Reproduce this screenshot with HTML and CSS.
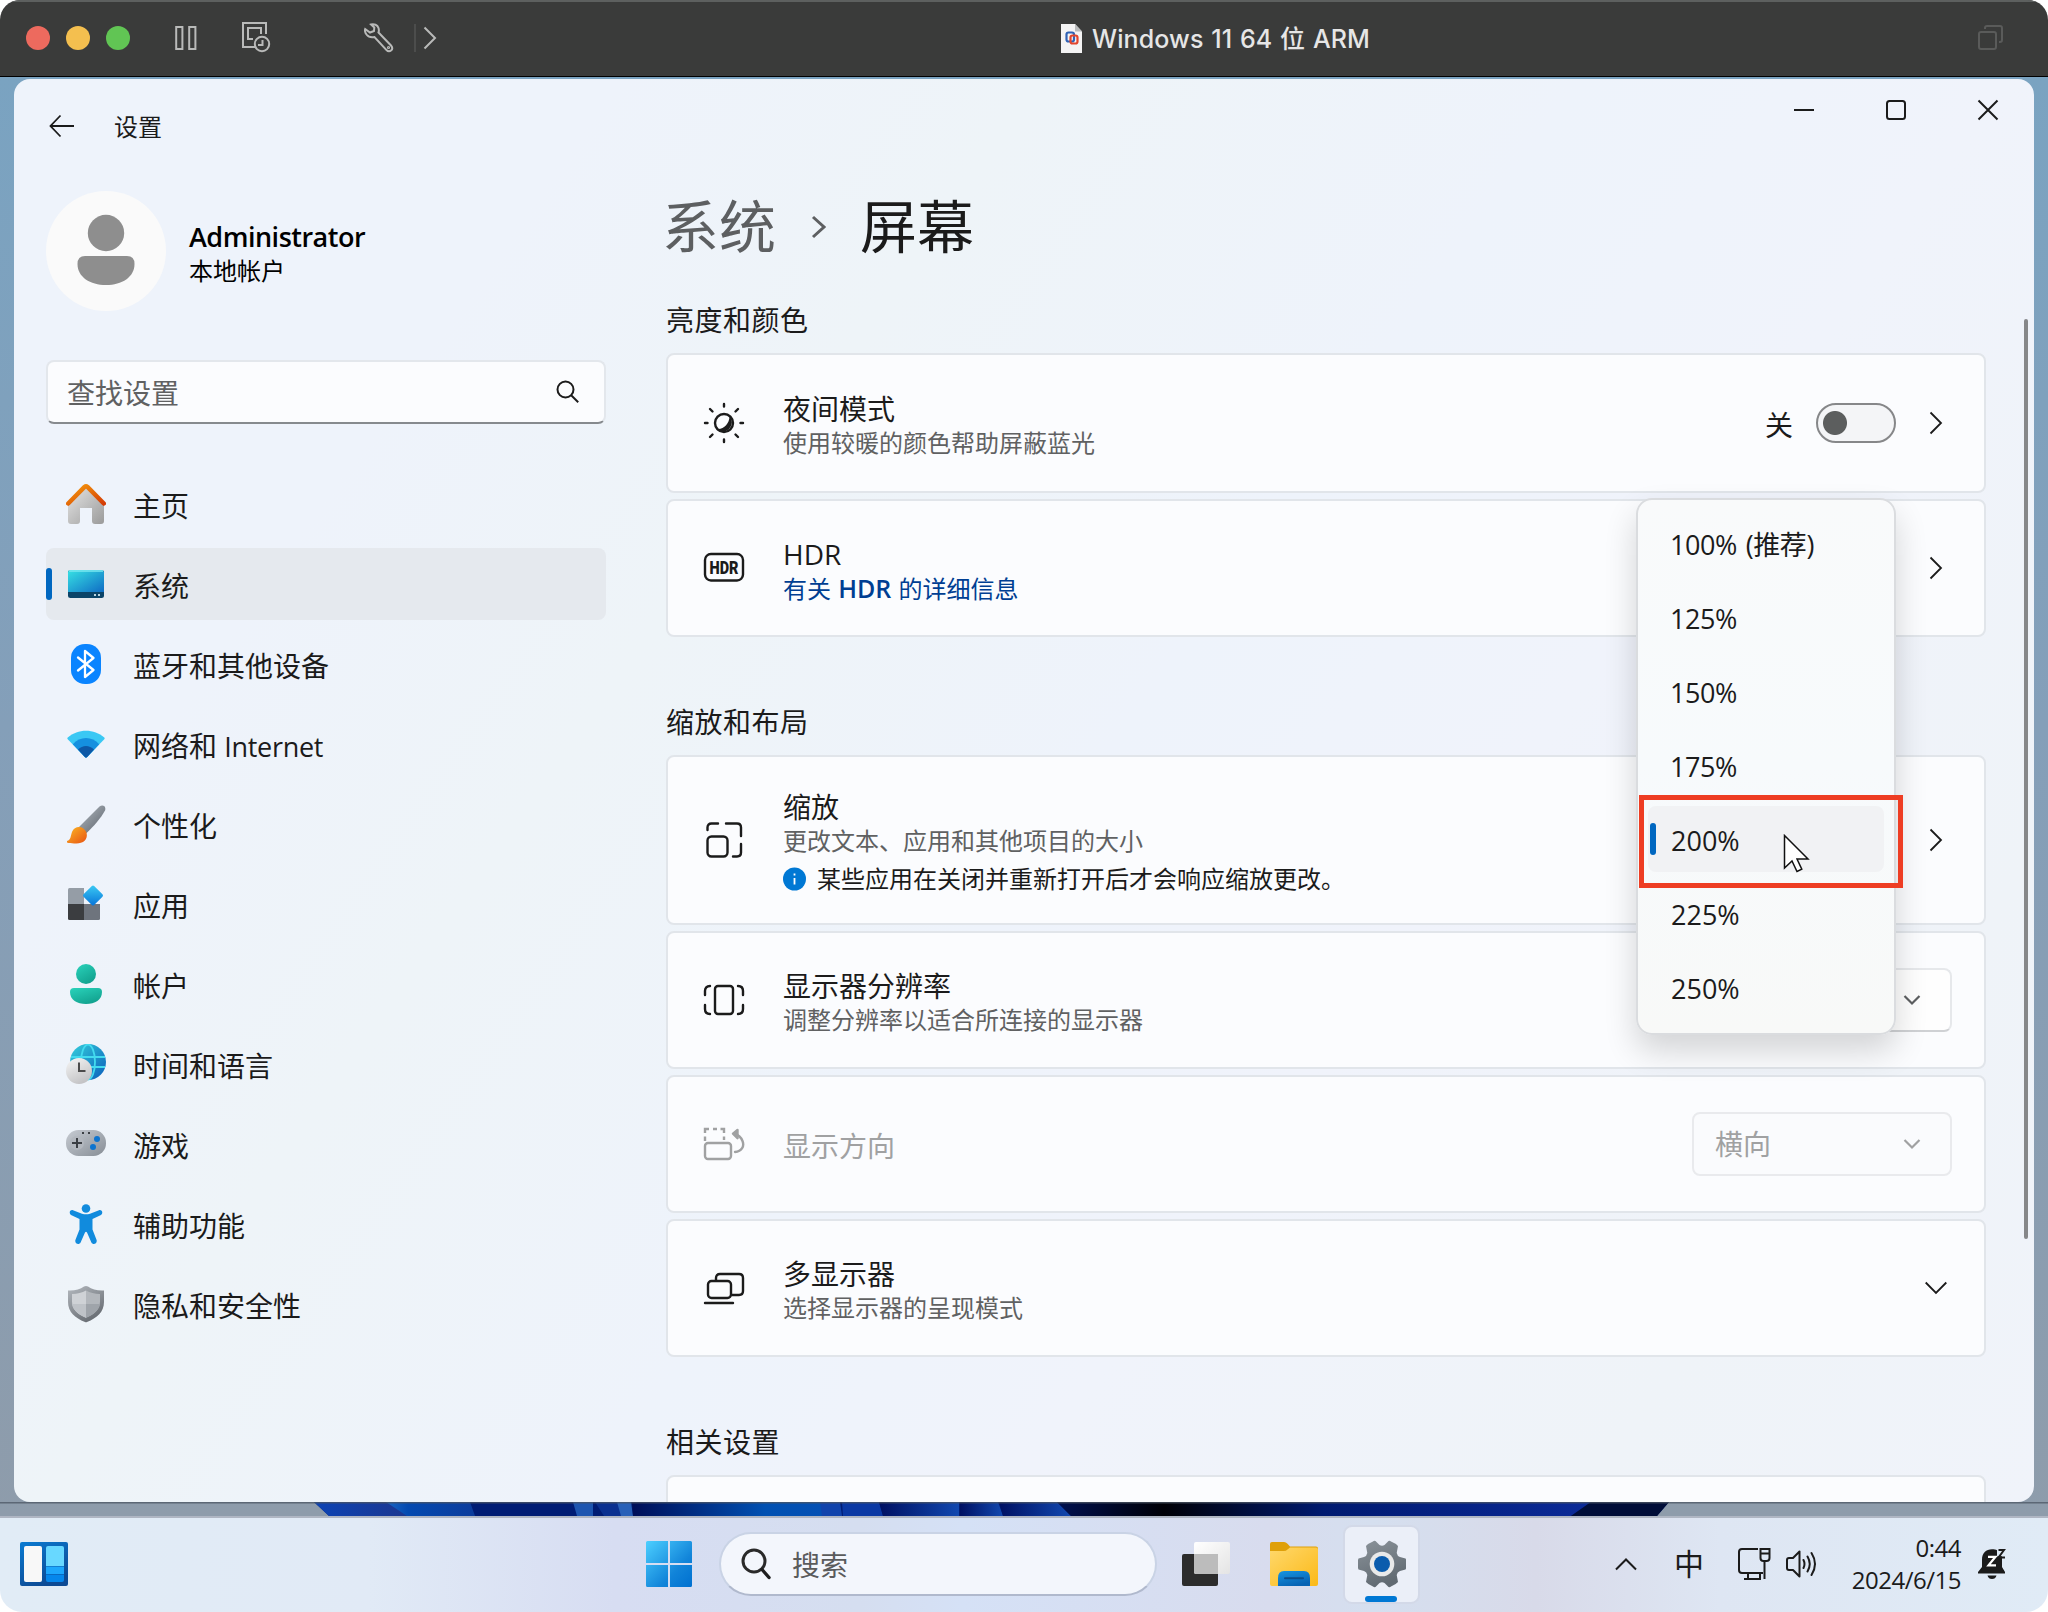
FILE: index.html
```html
<!DOCTYPE html>
<html lang="zh-CN">
<head>
<meta charset="utf-8">
<title>Windows 11 64 位 ARM</title>
<link rel="stylesheet" href="styles.css">
</head>
<body>
<div class="vm">
  <header class="vm-bar">
    <div class="lights"><i class="red"></i><i class="yellow"></i><i class="green"></i></div>
    <svg class="i-pause" width="22" height="24" viewBox="0 0 22 24"><path d="M1.2 1h6.2v22H1.2zM14.2 1h6.2v22h-6.2z"/></svg>
    <svg class="i-snap" width="30" height="32" viewBox="0 0 30 32"><path d="M24 12V1H1v24h12M6 17h5M6 18V6h13v6"/><circle cx="20" cy="22" r="7.2"/><path d="M20.5 18v5h-4.5"/></svg>
    <svg class="i-wrench" width="30" height="30" viewBox="0 0 30 30"><path d="M7 1.5C10 .5 13.500 2 14.500 5c.5 1.800.5 3.300 0 4.500L27 22.500c1.500 1.700 1.500 3.500.3 4.800-1.500 1.300-3.500 1.200-5-.5L10.500 14c-3 .8-6 0-8-2.500C1 9.500.7 7.500 1.200 6L6 9.500l4-1.500.3-3.500z"/><circle cx="24.500" cy="24.500" r=".6"/></svg>
    <span class="vm-sep"></span>
    <svg class="i-more" width="14" height="24" viewBox="0 0 14 24"><path d="M1.500 1.500L12 12 1.500 22.500"/></svg>
    <div class="vm-title">
      <svg width="24" height="31" viewBox="0 0 24 31"><path d="M1 1h14l7 7.500V30H1z" fill="#f4f4f4"/><path d="M15 1l7 7.500h-7z" fill="#b9bbbc"/><rect x="6.500" y="9.500" width="7.500" height="9" rx="2" fill="none" stroke="#2f62b5" stroke-width="2.200"/><rect x="10.500" y="12.500" width="7" height="8" rx="2" fill="none" stroke="#e2452c" stroke-width="2.200"/></svg>
      <span>Windows 11 64 位 ARM</span>
    </div>
    <svg class="i-stack" width="26" height="26" viewBox="0 0 26 26"><rect x="1" y="7" width="17" height="17" rx="2"/><path d="M7 4V3q0-2 2-2h13q2 0 2 2v12q0 2-2 2h-1"/></svg>
  </header>

  <div class="desktop">
    <section class="window">
      <header class="win-head">
        <svg class="back" width="26" height="24" viewBox="0 0 26 24"><path d="M11.500 1.500L1.500 12l10 10.500M1.500 12H25"/></svg>
        <span class="win-title">设置</span>
        <div class="caption">
          <span><svg width="20" height="20"><path d="M0 10h20"/></svg></span>
          <span><svg width="22" height="22"><rect x="2" y="2" width="18" height="18" rx="2.500"/></svg></span>
          <span><svg width="22" height="22"><path d="M1.500 1.500l19 19M20.500 1.500l-19 19"/></svg></span>
        </div>
      </header>
      <div class="win-body">
        <aside class="side">
          <div class="profile">
            <svg width="120" height="120"><circle cx="60" cy="60" r="60" fill="#fafafa"/><circle cx="60" cy="42" r="18.200" fill="#8e8e8e"/><path d="M39 65h42q7.500 0 7.500 8C88.500 86 76 94 60 94S31.500 86 31.500 73q0-8 7.500-8z" fill="#8e8e8e"/></svg>
            <div><b>Administrator</b><span>本地帐户</span></div>
          </div>
          <div class="find"><span>查找设置</span><svg width="24" height="24" viewBox="0 0 24 24"><circle cx="9.500" cy="9.500" r="8"/><path d="M15.200 15.200l7 7"/></svg></div>
          <nav>
            <a><svg width="40" height="40" viewBox="0 0 40 40"><defs><linearGradient id="hw" x2="1" y2="1"><stop stop-color="#e6e6e6"/><stop offset="1" stop-color="#9a9a9a"/></linearGradient><linearGradient id="hr" x2="1" y2="1"><stop stop-color="#f59a0c"/><stop offset="1" stop-color="#d43c05"/></linearGradient></defs><path d="M2 19L20 3l18 16v18q0 3-3 3h-6q-3 0-3-3V24H14v13q0 3-3 3H5q-3 0-3-3z" fill="url(#hw)"/><path d="M2.200 19.500L18.500 3q1.500-1.300 3 0l16.300 16.500" fill="none" stroke="url(#hr)" stroke-width="4.500" stroke-linecap="round"/></svg><span>主页</span></a>
            <a class="on"><svg width="40" height="40" viewBox="0 0 40 40"><defs><linearGradient id="sy" x2="1" y2="1"><stop stop-color="#37e2e4"/><stop offset="1" stop-color="#0f6cc4"/></linearGradient></defs><rect x="2" y="6" width="36" height="28" rx="2.500" fill="#0b4468"/><path d="M2 28V8.500Q2 6 4.500 6h31Q38 6 38 8.500V28z" fill="url(#sy)"/><path d="M3 7h34" stroke="#7be9f0" stroke-width="1.500"/><path d="M28 30h2v2h-2zM32 30h2v2h-2z" fill="#b9d4e0"/></svg><span>系统</span></a>
            <a><svg width="40" height="40" viewBox="0 0 40 40"><rect x="5" y="0" width="30" height="40" rx="14" fill="#0a84ff"/><path d="M12 13.500l15.500 12.500-8.500 7V7l8.500 7L12 26.500" fill="none" stroke="#fff" stroke-width="2.300" stroke-linejoin="round" stroke-linecap="round"/></svg><span>蓝牙和其他设备</span></a>
            <a><svg width="40" height="40" viewBox="0 0 40 40"><path d="M1.500 15Q1 14.300 1.700 13.600C12 4.500 28 4.500 38.300 13.600q.7.700.2 1.400L21.200 33q-1.200 1-2.400 0z" fill="#3ac8f4"/><path d="M6.800 20.300C14 12 26 12 33.200 20.300L21.200 33q-1.200 1-2.400 0z" fill="#1590df"/><path d="M12 25.600c4.500-4.800 11.500-4.800 16 0L21.200 33q-1.200 1-2.400 0z" fill="#0d58a6"/></svg><span>网络和 <span class="latin">Internet</span></span></a>
            <a><svg width="40" height="40" viewBox="0 0 40 40"><defs><linearGradient id="br" x2="1" y2="1"><stop stop-color="#b8bfc6"/><stop offset="1" stop-color="#585f68"/></linearGradient><linearGradient id="bt" x2="1" y2="1"><stop stop-color="#fbb825"/><stop offset="1" stop-color="#e85212"/></linearGradient></defs><path d="M12 24L33.500 2.500c3-2.500 7-.5 5.500 4C35 14 28 22 20 29.500z" fill="url(#br)"/><path d="M1 37c4-1 3.500-5 5-9 2-5 8-6.500 12-3s4 10-1 13c-5 2-12 1.800-16 .6z" fill="url(#bt)"/></svg><span>个性化</span></a>
            <a><svg width="40" height="40" viewBox="0 0 40 40"><defs><linearGradient id="ap" x2="1" y2="1"><stop stop-color="#3ccbf4"/><stop offset="1" stop-color="#0673d8"/></linearGradient></defs><path d="M2 5.500Q2 4 3.500 4H18v16H2z" fill="#959da6"/><path d="M2 20h16v16H3.500Q2 36 2 34.500z" fill="#3b3d40"/><path d="M18 20h16v14.500q0 1.500-1.500 1.500H18z" fill="#6e747d"/><rect x="19.500" y="4" width="15" height="15" rx="1.600" transform="rotate(45 27 11.500)" fill="url(#ap)"/></svg><span>应用</span></a>
            <a><svg width="40" height="40" viewBox="0 0 40 40"><defs><linearGradient id="ac" x2=".6" y2="1"><stop stop-color="#2ad3bb"/><stop offset="1" stop-color="#12a28f"/></linearGradient></defs><circle cx="20" cy="10" r="10" fill="url(#ac)"/><path d="M8 24h24q4 0 4 4c0 8-7 12-16 12S4 36 4 28q0-4 4-4z" fill="url(#ac)"/></svg><span>帐户</span></a>
            <a><svg width="40" height="40" viewBox="0 0 40 40"><defs><linearGradient id="gl" x2="1" y2="1"><stop stop-color="#35d0dc"/><stop offset="1" stop-color="#0a5dbb"/></linearGradient><linearGradient id="ck" x2=".5" y2="1"><stop stop-color="#f6f6f6"/><stop offset="1" stop-color="#c4c4c6"/></linearGradient></defs><circle cx="22" cy="18" r="18" fill="url(#gl)"/><g fill="none" stroke="#43dbef" stroke-width="1.800"><ellipse cx="22" cy="18" rx="7" ry="17.500"/><path d="M5 13h34M5 23h34"/></g><circle cx="13" cy="27" r="13" fill="url(#ck)"/><path d="M13 18.500V27h6.500" fill="none" stroke="#4b4b4b" stroke-width="2"/></svg><span>时间和语言</span></a>
            <a><svg width="40" height="40" viewBox="0 0 40 40"><defs><linearGradient id="gm" x2="1" y2="1"><stop stop-color="#c6cbd2"/><stop offset="1" stop-color="#878e96"/></linearGradient></defs><rect y="6" width="40" height="26" rx="12.500" fill="url(#gm)"/><circle cx="11" cy="19" r="7" fill="#b2b7be"/><path d="M11 14v10M6 19h10" stroke="#3b3f44" stroke-width="2"/><circle cx="31" cy="15" r="3" fill="#0d74cf"/><circle cx="27" cy="23" r="3" fill="#0d74cf"/><path d="M16 8h2v2h-2zM22 8h2v2h-2z" fill="#3b3f44"/></svg><span>游戏</span></a>
            <a><svg width="40" height="40" viewBox="0 0 40 40"><g fill="#118bdd"><circle cx="20" cy="4.500" r="4.300"/><path d="M7 6.200l9 3.600q4 1 8 0l9-3.600c3.500-.8 4.500 3.500 1.500 5L26.500 15v10.500L30.600 36c1 3.500-3.500 5.500-5.200 2.500L21 28.500q-1-1.500-2 0l-4.400 10c-1.700 3-6.200 1-5.200-2.500l4.100-10.500V15L5.500 11.200c-3-1.500-2-5.800 1.500-5z"/></g></svg><span>辅助功能</span></a>
            <a><svg width="40" height="40" viewBox="0 0 40 40"><defs><linearGradient id="sh" x2=".6" y2="1"><stop stop-color="#b4b9bf"/><stop offset="1" stop-color="#686d73"/></linearGradient></defs><path d="M2 6.500q10 .5 16-4 2-1.200 4 0 6 4.500 16 4V18c0 10-7 16-17 20q-1 .4-2 0C9 34 2 28 2 18z" fill="url(#sh)"/><path d="M20 6.500v27.300C11 30 6 25 6 17.500V10q8-.2 14-3.500z" fill="#cfd2d6"/><path d="M20 6.500v27.300c9-3.800 14-8.800 14-16.300V10q-8-.2-14-3.500z" fill="#b3b7bc"/><path d="M6.100 20H20v13.800C12 30.300 7 26 6.100 20z" fill="#bfc3c8"/><path d="M33.900 20H20v13.800c8-3.500 13-7.800 13.900-13.800z" fill="#9fa4aa"/></svg><span>隐私和安全性</span></a>
          </nav>
        </aside>

        <main class="main">
          <h1><span>系统</span><svg width="16" height="24" viewBox="0 0 16 24"><path d="M2 2l11 10L2 22"/></svg><strong>屏幕</strong></h1>
          <h2>亮度和颜色</h2>
          <article class="card tall">
            <svg class="ic" width="42" height="42" viewBox="0 0 42 42"><circle cx="21" cy="21" r="9"/><path d="M26.500 14a9.300 9.300 0 1 1-14 12.500c7 2 14-4 14-12.500z" fill="#1b1b1b" stroke="none"/><path stroke-linecap="round" d="M21 2v2.500M21 37.500V40M2 21h2.500M37.500 21H40M7 7l2.500 2.500M32.500 32.500L35 35M7 35l2.500-2.500M32.500 9.500L35 7"/></svg>
            <div class="tx"><p>夜间模式</p><small>使用较暖的颜色帮助屏蔽蓝光</small></div>
            <span class="state">关</span><span class="toggle"></span>
            <svg class="chev" width="22" height="24" viewBox="0 0 22 24"><path d="M5.500 1.500L16 12 5.500 22.500"/></svg>
          </article>
          <article class="card">
            <svg class="ic" width="42" height="42" viewBox="0 0 42 42"><rect x="2" y="7" width="38" height="26.500" rx="6"/><text x="21" y="27" text-anchor="middle" textLength="29" lengthAdjust="spacingAndGlyphs">HDR</text></svg>
            <div class="tx"><p>HDR</p><small class="link">有关 <b>HDR</b> 的详细信息</small></div>
            <svg class="chev" width="22" height="24" viewBox="0 0 22 24"><path d="M5.500 1.500L16 12 5.500 22.500"/></svg>
          </article>
          <h2 class="gap">缩放和布局</h2>
          <article class="card three">
            <svg class="ic" width="42" height="42" viewBox="0 0 42 42"><rect x="4.500" y="17.500" width="20" height="20" rx="4"/><path stroke-linecap="round" d="M4.500 11V8.500q0-4 4-4H15M23 4.500h11q4 0 4 4V17M38 25v8.500q0 4-4 4h-4"/></svg>
            <div class="tx"><p>缩放</p><small>更改文本、应用和其他项目的大小</small><em><svg width="24" height="24"><circle cx="11.500" cy="12" r="11.500" fill="#0078d4"/><path d="M11.500 11v6.500M11.500 6.500v2" stroke="#fff" stroke-width="1.800"/></svg>某些应用在关闭并重新打开后才会响应缩放更改。</em></div>
            <svg class="chev" width="22" height="24" viewBox="0 0 22 24"><path d="M5.500 1.500L16 12 5.500 22.500"/></svg>
          </article>
          <article class="card">
            <svg class="ic" width="42" height="42" viewBox="0 0 42 42"><rect x="12" y="7" width="18" height="28" rx="3"/><path stroke-linecap="round" d="M7 7Q2 7 2 12v4M2 26v4q0 5 5 5M35 7q5 0 5 5v4M40 26v4q0 5-5 5"/></svg>
            <div class="tx"><p>显示器分辨率</p><small>调整分辨率以适合所连接的显示器</small></div>
            <span class="select"><span></span><svg width="18" height="12" viewBox="0 0 18 12"><path d="M1.500 2L9 9.500 16.500 2"/></svg></span>
          </article>
          <article class="card off">
            <svg class="ic" width="42" height="42" viewBox="0 0 42 42"><rect x="2" y="20" width="26" height="16" rx="3"/><path d="M2 10V6h4M10 6h4M17.500 6H21v4M2 13.500V18M21 13.500V17"/><path stroke-linecap="round" d="M32 29c7-.5 9.500-6 7.500-11-1.500-4-4-6-8-7"/><path d="M34.500 7l-4.500 3.700 4.500 4.500z" fill="#a0a1a2" stroke-linejoin="round"/></svg>
            <div class="tx"><p>显示方向</p></div>
            <span class="select"><span>横向</span><svg width="18" height="12" viewBox="0 0 18 12"><path d="M1.500 2L9 9.500 16.500 2"/></svg></span>
          </article>
          <article class="card">
            <svg class="ic" width="42" height="42" viewBox="0 0 42 42"><rect x="5" y="14" width="23" height="17" rx="3.500"/><path d="M13 13.500V11q0-4 4-4h19q4 0 4 4v13q0 4-4 4h-7"/><path stroke-linecap="round" d="M2 36h28"/></svg>
            <div class="tx"><p>多显示器</p><small>选择显示器的呈现模式</small></div>
            <svg class="chev" width="22" height="14" viewBox="0 0 22 14"><path d="M.7 1.500L11 12 21.300 1.500"/></svg>
          </article>
          <h2 class="gap">相关设置</h2>
          <article class="card"></article>
        </main>
        <div class="scroll"></div>
      </div>

      <ul class="menu">
        <li>100% (推荐)</li><li>125%</li><li>150%</li><li>175%</li><li class="sel">200%</li><li>225%</li><li>250%</li>
      </ul>
      <div class="mark"></div>
      <svg class="cursor" width="28" height="40" viewBox="0 0 28 40"><path d="M1.500 1.500v32.500l7.500-7 5 10.500 4.800-2.300-4.800-10.200h11z" fill="#fff" stroke="#111" stroke-width="1.500"/></svg>
    </section>
    <svg class="bloom" width="2048" height="14" viewBox="0 0 2048 14">
      <defs>
        <linearGradient id="b1"><stop stop-color="#0c43b4"/><stop offset="1" stop-color="#1c3790"/></linearGradient>
        <linearGradient id="b2"><stop stop-color="#1a66c4"/><stop offset=".25" stop-color="#0349b0"/><stop offset="1" stop-color="#0c3c9c"/></linearGradient>
        <linearGradient id="b3"><stop stop-color="#000e58"/><stop offset=".7" stop-color="#0050b2"/><stop offset="1" stop-color="#0350b4"/></linearGradient>
        <linearGradient id="b4"><stop stop-color="#001062"/><stop offset="1" stop-color="#1148b0"/></linearGradient>
        <linearGradient id="b5"><stop stop-color="#001050"/><stop offset=".2" stop-color="#000006"/><stop offset=".5" stop-color="#001a70"/><stop offset="1" stop-color="#0b2a98"/></linearGradient>
      </defs>
      <path d="M314 0H1669l-12 14H329z" fill="#001c74"/>
      <path d="M314 0h80l14 14h-79z" fill="url(#b1)"/><path d="M386 0h84l5 14h-68z" fill="url(#b2)"/>
      <path d="M573 0h20v14h-16z" fill="#1d55b0"/><path d="M595 0h25l4 14h-20z" fill="#0a3090"/><path d="M617 0h14l2 14h-12z" fill="#2860b8"/>
      <path d="M632 0h190v14H633z" fill="url(#b3)"/><path d="M820 0h20l2 14h-20z" fill="#1043ac"/><path d="M842 0h37l4 14h-40z" fill="#0a38a4"/>
      <path d="M879 0h80v14h-76z" fill="url(#b4)"/><path d="M960 0h38l5 14h-43z" fill="url(#b4)"/><path d="M999 0h58l14 14h-68z" fill="url(#b4)"/>
      <path d="M1057 0h534l-20 14h-500z" fill="url(#b5)"/><path d="M1591 0h78l-12 14h-86z" fill="#000d38"/>
      <path d="M0 0h2048v1.500H0z" fill="#4b5563" opacity=".75"/>
    </svg>
  </div>

  <footer class="task">
    <svg class="t-widget" width="48" height="44" viewBox="0 0 48 44"><defs><linearGradient id="wg" x2=".5" y2="1"><stop stop-color="#0a7bd2"/><stop offset="1" stop-color="#0d4a94"/></linearGradient></defs><rect width="48" height="44" rx="2" fill="url(#wg)"/><rect x="4" y="4" width="18" height="36" rx="2" fill="#f8f8f8"/><path d="M26 6q0-2 2-2h14q2 0 2 2v18H26z" fill="#68d8ff"/><path d="M26 24.500h18V32H26z" fill="#1da7fc"/><path d="M26 32.500h18V38q0 2-2 2H28q-2 0-2-2z" fill="#0587ec"/></svg>
    <svg class="t-start" width="46" height="46" viewBox="0 0 46 46"><defs><linearGradient id="ws" gradientUnits="userSpaceOnUse" x1="0" y1="0" x2="46" y2="46"><stop stop-color="#4ccfff"/><stop offset=".65" stop-color="#1184d9"/><stop offset="1" stop-color="#0070d0"/></linearGradient></defs><path d="M1.500 0H22v22H0V1.500Q0 0 1.500 0zM24 0h20.500Q46 0 46 1.500V22H24zM0 24h22v22H1.500Q0 46 0 44.500zM24 24h22v20.500q0 1.500-1.500 1.500H24z" fill="url(#ws)"/></svg>
    <div class="t-search"><svg width="30" height="32" viewBox="0 0 30 32"><circle cx="13" cy="13" r="11" fill="none" stroke="#2a2a2a" stroke-width="3"/><path d="M21 21.500l7 8" stroke="#1f1f1f" stroke-width="3.400" stroke-linecap="round"/></svg><span>搜索</span></div>
    <svg class="t-view" width="48" height="44" viewBox="0 0 48 44"><defs><linearGradient id="tv" x2="1" y2="1"><stop stop-color="#fff"/><stop offset="1" stop-color="#e4e4e4"/></linearGradient></defs><rect y="12" width="36" height="32" rx="2" fill="#2c2c2c"/><rect x="12" width="36" height="32" rx="2" fill="url(#tv)"/><path d="M12 12h24v20H14q-2 0-2-2z" fill="#bcbcbc"/></svg>
    <svg class="t-files" width="48" height="44" viewBox="0 0 48 44"><defs><linearGradient id="fo" x2="1" y2="1"><stop stop-color="#ffd86c"/><stop offset="1" stop-color="#fbb917"/></linearGradient><linearGradient id="fb" x2=".5" y2="1"><stop stop-color="#1795e2"/><stop offset="1" stop-color="#0663b4"/></linearGradient></defs><path d="M0 2q0-2 2-2h12q2 0 3.500 1.700L20 4.500h26q2 0 2 2V20H0z" fill="#dfa009"/><path d="M0 9h14q2 0 3.500-1.500L20 5.500h26q2 0 2 2V42q0 2-2 2H2q-2 0-2-2z" fill="url(#fo)"/><path d="M8 44V36q0-7 6-7h20q6 0 6 7v8z" fill="url(#fb)"/><path d="M15 36.300h18" stroke="#0b4d8c" stroke-width="2" stroke-linecap="round"/></svg>
    <div class="t-app"><svg width="48" height="48" viewBox="-24 -24 48 48"><defs><linearGradient id="ge" x2=".4" y2="1"><stop stop-color="#8b939a"/><stop offset="1" stop-color="#616a72"/></linearGradient></defs><path d="M-9-22.500q1-1 2.500-.5l4 4q2.500 1.500 5 0l4-4q1.500-.5 2.500.5 5 2 7 4.500l-1.300 7q.5 3 3.300 4l5.500 1.500q1 1 1 5.500t-1 5.500L18 7q-2.800 1-3.300 4l1.300 7q-2 2.500-7 4.500-1 1-2.500.5l-4-4q-2.500-1.500-5 0l-4 4q-1.500.5-2.500-.5-5-2-7-4.500l1.300-7Q-15.200 8-18 7l-5.500-1.500q-.7-1-.7-5.500t.7-5.500L-18-7q2.800-1 3.300-4L-16-18q2-2.500 7-4.500z" fill="url(#ge)"/><circle r="12.300" fill="#e9e9e9"/><circle r="8" fill="#0b5cad"/></svg><i></i></div>
    <svg class="t-up" width="22" height="14" viewBox="0 0 22 14"><path d="M1 12.500l10-10 10 10"/></svg>
    <span class="t-ime">中</span>
    <svg class="t-net" width="34" height="34" viewBox="0 0 34 34"><path d="M21 2H5Q2 2 2 5v18q0 3 3 3h21M11 26v6M23 26v6M7 32h17M27.500 14v18M23.500 2h9v9q0 3-3 3h-3q-3 0-3-3zM23.500 6.500h9"/></svg>
    <svg class="t-vol" width="34" height="30" viewBox="0 0 34 30"><path d="M2 11q0-2 2-2h4l6.500-6.500V27.500L8 21H4q-2 0-2-2zM18.500 11q2 4 0 8M22.500 7.500q4.500 7.500 0 15M26.500 4q7 11 0 22" stroke-linecap="round" stroke-linejoin="round"/></svg>
    <div class="t-time"><span>0:44</span><span>2024/6/15</span></div>
    <svg class="t-bell" width="30" height="32" viewBox="0 0 30 32"><path d="M4 11.500C4 5 8 1.200 14 1.200c2 0 4 .3 5 1v6h5V19l3 5v1.500H0V24l4-5zM9.500 27.500h9q-1 3.500-4.500 3.500t-4.500-3.500z" fill="#1b1b1b"/><path d="M10 8.800h7.500l-7 8.500H18" fill="none" stroke="#fff" stroke-width="2.200"/><path d="M20.500 2h5.500l-5.500 7.500H27" fill="none" stroke="#1b1b1b" stroke-width="2"/></svg>
  </footer>
</div>
</body>
</html>
```

FILE: styles.css
```css
* { box-sizing: border-box; margin: 0; padding: 0; }
body {
  background: #fff;
  font-family: "Open Sans", "Noto Sans CJK SC", sans-serif;
  color: #1b1b1b;
}
svg { display: block; flex: none; }
i, em { font-style: normal; }

.vm {
  width: 2048px; height: 1612px;
  display: flex; flex-direction: column;
  border-radius: 20px 20px 22px 22px;
  overflow: hidden;
}

/* Virtual machine title bar */
.vm-bar {
  height: 77px; flex: none;
  display: flex; align-items: center;
  padding-bottom: 2px;
  background: #3a3b3a;
  border-top: 2px solid #5d605f;
  border-bottom: 1px solid #000;
}
.vm-bar > svg { fill: none; stroke: #b9bab9; stroke-width: 2; }
.lights { display: flex; gap: 16px; margin-left: 26px; }
.lights i { width: 24px; height: 24px; border-radius: 50%; }
.red { background: #ed6a5e; }
.yellow { background: #f4bf4f; }
.green { background: #61c554; }
.i-pause { margin-left: 45px; }
.i-snap { margin-left: 45px; }
.i-wrench { margin-left: 92px; }
.vm-sep { width: 2px; height: 28px; margin-left: 20px; background: #4c4d4c; }
.i-more { margin-left: 7px; }
.vm-title {
  display: flex; align-items: center; gap: 8px;
  margin-left: 623px; width: 400px;
  font: 500 25px "Inter", "Noto Sans CJK SC", sans-serif;
  letter-spacing: .1px; word-spacing: 1px;
  color: #e6e6e6; white-space: nowrap;
}
.vm-title span { margin-top: -2px; }
.vm-bar > .i-stack { margin-left: auto; margin-right: 44px; stroke: #5a5b5a; }

/* Desktop and window */
.desktop {
  height: 1439px; flex: none;
  padding: 2px 14px 0;
  background: linear-gradient(#7aa3c1, #849fb9 45%, #8e9cab);
}
.window {
  position: relative;
  height: 1423px;
  border-radius: 16px;
  overflow: hidden;
  background: linear-gradient(125deg, #eef3fb 0%, #eef3fb 20%, #eef4f8 34%, #eef3fb 52%, #f0f3fb 66%, #eff3f8 85%, #f0f3fa 100%);
}
.bloom { margin-left: -14px; }
.win-head { height: 96px; display: flex; align-items: center; }
.win-head svg { fill: none; stroke: #1b1b1b; stroke-width: 2; }
.win-head .back { margin: -2px 0 0 35px; stroke-width: 1.8; }
.win-title { margin: -4px 0 0 39px; font-size: 24px; }
.caption { display: flex; margin-left: auto; align-self: flex-start; }
.caption span { width: 92px; height: 61px; display: grid; place-items: center; }
.win-body { height: 1327px; display: flex; padding-left: 32px; overflow: hidden; }

/* Sidebar */
.side { width: 560px; padding-top: 16px; flex: none; }
.profile { display: flex; align-items: center; gap: 23px; height: 120px; }
.profile div { padding-top: 6px; }
.profile b, .profile span { display: block; line-height: 34px; }
.profile b { font-size: 27px; font-weight: 600; letter-spacing: -.5px; color: #000; }
.profile span { font-size: 24px; color: #000; }
.find {
  display: flex; align-items: center; justify-content: space-between;
  height: 64px; margin-top: 49px; padding: 0 24px 0 19px;
  background: #fbfcfe;
  border: 2px solid #e3e7ec; border-bottom-color: #868a8e;
  border-radius: 8px;
  font-size: 28px; color: #606162;
}
.find svg { fill: none; stroke: #1b1b1b; stroke-width: 2; }
nav { display: flex; flex-direction: column; gap: 8px; margin-top: 44px; }
nav a {
  position: relative;
  display: flex; align-items: center; gap: 27px;
  height: 72px; padding-left: 20px;
  border-radius: 8px;
  font-size: 28px;
}
nav a > span { padding-top: 2px; }
nav .latin { font-size: 27px; letter-spacing: -.3px; }
nav .on { background: #e5e9ee; }
nav .on::before {
  content: ""; position: absolute; left: 0; top: 20px;
  width: 6px; height: 32px; border-radius: 3px; background: #0067c0;
}

/* Main column */
.main { width: 1320px; margin-left: 60px; flex: none; }
h1 {
  height: 112px; padding-bottom: 9px;
  display: flex; align-items: center;
  font-size: 57px; font-weight: 400;
}
h1 span, h1 strong { margin-top: -6px; font-weight: inherit; }
h1 span { margin-left: -4px; color: #5d5f61; }
h1 svg { margin: 0 33px 0 35px; fill: none; stroke: #5d5f61; stroke-width: 3; }
h2 { height: 66px; line-height: 66px; font-size: 28px; font-weight: 400; letter-spacing: .5px; }
h2.gap { margin-top: 52px; }
.card {
  height: 138px; display: flex; align-items: center;
  padding: 0 37px 0 35px;
  background: #fbfcfe;
  border: 2px solid #e1e5ea; border-radius: 8px;
}
.card + .card { margin-top: 6px; }
.tall { height: 140px; }
.three { height: 170px; }
.card svg { fill: none; stroke: #1b1b1b; stroke-width: 2.4; }
.card .ic text { font: 900 18px "Roboto", sans-serif; fill: #1b1b1b; stroke: none; }
.tx { flex: 1; margin-left: 38px; padding-top: 4px; }
.tx p { font-size: 28px; line-height: 36px; }
.tx small, .tx em { display: block; font-size: 24px; line-height: 32px; }
.tx small { color: #606162; }
.tx small.link { color: #003e92; }
.link b { margin: 0 1px; font-size: 25px; font-weight: 600; }
.tx em { display: flex; align-items: center; gap: 10px; margin-top: 6px; }
.tx em svg { stroke: none; }
.state { padding-top: 2px; font-size: 28px; }
.toggle {
  width: 80px; height: 40px; margin: 0 29px 0 23px;
  border: 2px solid #868789; border-radius: 20px;
  background: radial-gradient(circle at 17px 18px, #5c5e5e 11.5px, #f4f5f7 12.5px);
}
.card .chev { stroke-width: 1.8; }
.select {
  width: 260px; height: 64px; margin-right: -5px;
  display: flex; align-items: center; justify-content: space-between;
  padding: 0 29px 0 21px;
  background: #fefefe;
  border: 2px solid #e6e8eb; border-bottom-color: #cfd1d4; border-radius: 8px;
  font-size: 28px;
}
.select span { margin-top: -2px; }
.card .select svg { stroke: #5d5f61; stroke-width: 2.2; }
.off { color: #a0a1a2; }
.off .select { background: #fafbfd; border-color: #e9eaed; }
.off svg, .card.off .select svg, .card.off .ic { stroke: #a0a1a2; }
.off .tx { padding-top: 3px; }
.scroll { width: 4px; height: 920px; margin: 144px 0 0 38px; border-radius: 2px; background: #868789; }

/* Scale drop-down */
.menu {
  position: absolute; left: 1622px; top: 419px;
  width: 260px; height: 537px; padding-top: 10px;
  list-style: none;
  background: linear-gradient(#f9fafb, #f7fafc 50%, #f8f9f8);
  border: 2px solid #dadcdf; border-radius: 16px;
  box-shadow: 0 16px 32px rgba(0, 0, 0, .16);
}
.menu li {
  position: relative; height: 66px; margin: 0 10px 8px;
  line-height: 70px; padding-left: 22px;
  font-size: 27px; letter-spacing: -.4px; word-spacing: 2px;
  border-radius: 8px;
}
.menu li:nth-child(n+5) { padding-left: 23px; letter-spacing: 0; }
.menu .sel { background: #f1f2f4; }
.menu .sel::before {
  content: ""; position: absolute; left: 2px; top: 17px;
  width: 6px; height: 32px; border-radius: 3px; background: #0067c0;
}
.mark { position: absolute; left: 1625px; top: 716px; width: 264px; height: 93px; border: 5px solid #ee3d23; }
.cursor { position: absolute; left: 1769px; top: 755px; }

/* Taskbar */
.task {
  height: 96px; flex: none; display: flex; align-items: center;
  padding-bottom: 2px;
  border-top: 2px solid #afb6c3;
  background: linear-gradient(90deg, #e1ecf6 0, #e1eaf6 18%, #d7ddf2 30%, #d5def0 42%, #d5e1f6 47%, #d8dcee 62%, #d5dfef 67%, #d8dae9 75%, #dee6f3 84%, #e0ebf6 100%);
}
.t-widget { margin-left: 20px; }
.t-start { margin-left: 578px; }
.t-search {
  display: flex; align-items: center; gap: 21px;
  width: 438px; height: 64px; margin-left: 27px; padding-left: 20px;
  background: #f3f6fc;
  border: 2px solid #c9d3e5; border-bottom-color: #b0b9cd; border-radius: 32px;
  font-size: 28px; color: #5a5b5c;
}
.t-view { margin-left: 25px; }
.t-files { margin-left: 40px; }
.t-app {
  position: relative; width: 77px; height: 79px; margin-left: 25px;
  display: grid; place-items: center;
  background: #ebeff8; border: 2px solid #d3d9e8; border-radius: 9px;
}
.t-app i { position: absolute; left: 20px; bottom: 0; width: 32px; height: 6px; border-radius: 3px; background: #0078d4; }
.t-up, .t-net, .t-vol { fill: none; stroke: #1b1b1b; stroke-width: 2; }
.t-up { margin-left: 195px; }
.t-ime { margin: -4px 0 0 37px; font-size: 30px; }
.t-net { margin-left: 33px; }
.t-vol { margin-left: 14px; }
.t-time {
  display: flex; flex-direction: column; align-items: flex-end;
  width: 142px; font-size: 24px; line-height: 32px; letter-spacing: -.5px;
}
.t-bell { margin-left: 17px; }
```
